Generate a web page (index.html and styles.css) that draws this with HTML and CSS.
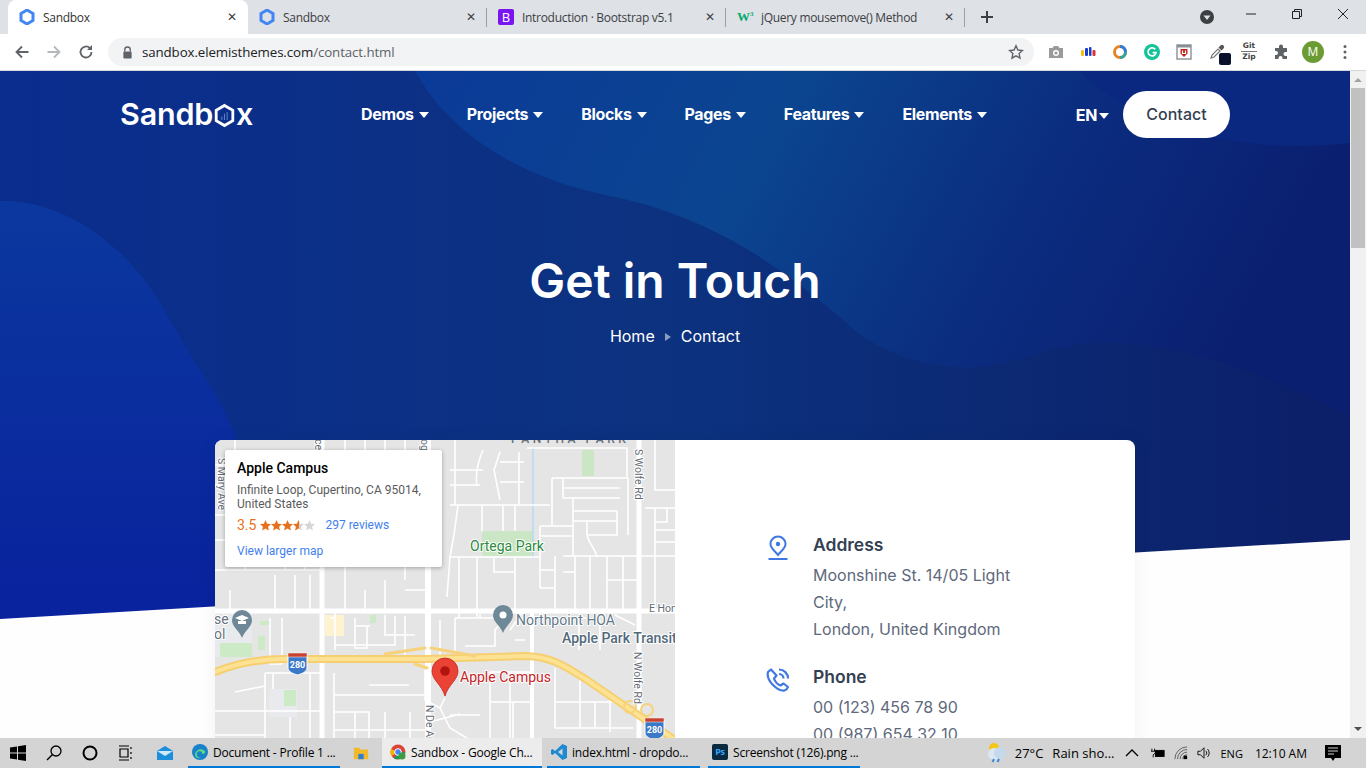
FILE: index.html
```html
<!DOCTYPE html>
<html lang="en">
<head>
    <meta charset="UTF-8">
    <meta name="viewport" content="width=device-width, initial-scale=1.0">
    <title>Sandbox</title>
    <link rel="stylesheet" href="styles.css">
</head>
<body>
    <!-- browser tabs -->
    <div class="tabbar">
        <div class="tab active">
            <svg class="fav" viewBox="0 0 16 16"><path d="M8 1l6 3.5v7L8 15l-6-3.5v-7z" fill="#fff" stroke="#4285f4" stroke-width="3"/></svg>
            <span class="tab-title">Sandbox</span>
            <span class="tab-x">&#10005;</span>
        </div>
        <div class="tab">
            <svg class="fav" viewBox="0 0 16 16"><path d="M8 1l6 3.5v7L8 15l-6-3.5v-7z" fill="#dee1e6" stroke="#4285f4" stroke-width="3"/></svg>
            <span class="tab-title">Sandbox</span>
            <span class="tab-x">&#10005;</span>
        </div>
        <div class="tab">
            <span class="fav fav-b">B</span>
            <span class="tab-title">Introduction · Bootstrap v5.1</span>
            <span class="tab-x">&#10005;</span>
        </div>
        <div class="tab">
            <span class="fav fav-w">W<sup>3</sup></span>
            <span class="tab-title">jQuery mousemove() Method</span>
            <span class="tab-x">&#10005;</span>
        </div>
        <svg class="new-tab" viewBox="0 0 14 14"><path d="M7 1v12M1 7h12" stroke="#3c4043" stroke-width="2"/></svg>
        <div class="win-controls">
            <span class="profile-drop"><svg viewBox="0 0 14 14"><circle cx="7" cy="7" r="7" fill="#3c4043"/><path d="M3.5 5.5h7L7 10z" fill="#dee1e6"/></svg></span>
            <svg class="win-btn" viewBox="0 0 12 12"><path d="M1 6h10" stroke="#222" stroke-width="1"/></svg>
            <svg class="win-btn" viewBox="0 0 12 12"><path d="M1.5 3.5h7v7h-7zM3.5 3.5v-2h7v7h-2" fill="none" stroke="#222" stroke-width="1"/></svg>
            <svg class="win-btn" viewBox="0 0 12 12"><path d="M1 1l10 10M11 1L1 11" stroke="#222" stroke-width="1"/></svg>
        </div>
    </div>

    <!-- address bar -->
    <div class="toolbar">
        <svg class="tool-icon" viewBox="0 0 16 16"><path d="M14.5 8H2.5M8 2.5L2.5 8 8 13.5" fill="none" stroke="#5f6368" stroke-width="1.8"/></svg>
        <svg class="tool-icon" viewBox="0 0 16 16"><path d="M1.5 8h12M8 2.5L13.5 8 8 13.5" fill="none" stroke="#b4b7bb" stroke-width="1.8"/></svg>
        <svg class="tool-icon" viewBox="0 0 16 16"><path d="M13.5 8a5.5 5.5 0 1 1-1.6-3.9" fill="none" stroke="#5f6368" stroke-width="1.8"/><path d="M14 1v5h-5z" fill="#5f6368"/></svg>
        <div class="omnibox">
            <svg class="lock" viewBox="0 0 12 14"><path d="M3 6V4a3 3 0 0 1 6 0v2" fill="none" stroke="#5f6368" stroke-width="1.5"/><rect x="1.5" y="6" width="9" height="7.5" rx="1" fill="#5f6368"/></svg>
            <span class="url">sandbox.elemisthemes.com<span class="url-path">/contact.html</span></span>
            <svg class="star" viewBox="0 0 16 16"><path d="M8 1.8l1.9 4.2 4.6.5-3.4 3.1.9 4.5L8 11.8l-4 2.3.9-4.5-3.4-3.1 4.6-.5z" fill="none" stroke="#5f6368" stroke-width="1.4"/></svg>
        </div>
        <div class="extensions">
            <svg class="ext" viewBox="0 0 16 16"><path d="M1 4h3.5L6 2h4l1.500 2H15v10H1z" fill="#9a9a9a"/><circle cx="8" cy="9" r="3" fill="#fff"/><circle cx="8" cy="9" r="1.600" fill="#9a9a9a"/></svg>
            <svg class="ext" viewBox="0 0 16 16"><rect x="1" y="6" width="3" height="6" rx="1" fill="#f4c20d"/><rect x="5" y="4" width="3" height="8" rx="1" fill="#1a3fd0"/><rect x="9" y="3" width="2.500" height="9" rx="1" fill="#1a3fd0"/><rect x="12.500" y="6" width="3" height="6" rx="1" fill="#db3236"/></svg>
            <svg class="ext" viewBox="0 0 16 16"><circle cx="8" cy="8" r="5.500" fill="none" stroke="#e8832a" stroke-width="3"/><path d="M8 2.500A5.500 5.500 0 0 1 13.500 8" fill="none" stroke="#2b7de0" stroke-width="3"/><path d="M13.500 8A5.500 5.500 0 0 1 8 13.500" fill="none" stroke="#2aa7a0" stroke-width="3"/></svg>
            <svg class="ext" viewBox="0 0 16 16"><circle cx="8" cy="8" r="8" fill="#15c39a"/><path d="M11.200 5.400A4 4 0 1 0 12 8.600H8.600" fill="none" stroke="#fff" stroke-width="1.700"/></svg>
            <svg class="ext" viewBox="0 0 16 16"><rect x="1" y="1" width="14" height="14" fill="#fff" stroke="#8a8f94" stroke-width="1.400"/><rect x="1" y="1" width="14" height="2.500" fill="#8a8f94"/><path d="M4.500 5h7v4.500L8 13 4.500 9.500z" fill="#c5221f"/><path d="M6.500 6.500v3h3v-3" fill="none" stroke="#fff" stroke-width="1.200"/></svg>
            <span class="ext ext-dropper">
                <svg viewBox="0 0 16 16"><path d="M2 14l1-3 6-6 2 2-6 6z" fill="#fff" stroke="#777" stroke-width="1.200"/><path d="M9.500 3.500l2-2a1.400 1.400 0 0 1 3 3l-2 2z" fill="#555"/></svg>
                <span class="dropper-badge"></span>
            </span>
            <span class="ext gitzip"><span class="gz-line">Git</span><span>Zip</span></span>
            <svg class="ext" viewBox="0 0 16 16"><path d="M6 2.500a2 2 0 0 1 4 0V4h4v4h-1.500a2 2 0 0 0 0 4H14v3H9.500v-1a2 2 0 0 0-4 0v1H2v-4h1a2 2 0 0 0 0-4H2V4h4z" fill="#5f6368"/></svg>
            <span class="avatar">M</span>
            <svg class="kebab" viewBox="0 0 4 16"><circle cx="2" cy="2.500" r="1.500" fill="#5f6368"/><circle cx="2" cy="8" r="1.500" fill="#5f6368"/><circle cx="2" cy="13.500" r="1.500" fill="#5f6368"/></svg>
        </div>
    </div>

    <div class="viewport">
        <div class="page">
            <svg class="hero-bg" viewBox="0 0 1350 600" preserveAspectRatio="none">
                <defs>
                    <linearGradient id="heroBase" x1="0" y1="0" x2="1" y2="0">
                        <stop offset="0" stop-color="#0a2d8e"/>
                        <stop offset="0.5" stop-color="#0c327f"/>
                        <stop offset="1" stop-color="#0c1f68"/>
                    </linearGradient>
                    <linearGradient id="heroWave" x1="0" y1="0" x2="1" y2="0.2">
                        <stop offset="0" stop-color="#0b3a98"/>
                        <stop offset="0.4" stop-color="#0b4590"/>
                        <stop offset="0.7" stop-color="#0b2d80"/>
                        <stop offset="1" stop-color="#0b1f70"/>
                    </linearGradient>
                    <linearGradient id="leftWave" x1="0" y1="0" x2="0" y2="1">
                        <stop offset="0" stop-color="#0b389e"/>
                        <stop offset="1" stop-color="#091f9e"/>
                    </linearGradient>
                </defs>
                <rect width="1350" height="600" fill="url(#heroBase)"/>
                <path d="M415 0C445 55 510 105 610 125C700 143 770 185 850 255C890 290 960 310 1030 285C1100 262 1180 262 1350 345V0Z" fill="url(#heroWave)"/>
                <path d="M1080 0C1130 55 1240 85 1350 72V0Z" fill="#0b2880"/>
                <path d="M0 130C60 128 125 170 165 240C205 315 245 350 245 420C245 490 215 530 215 600H0Z" fill="url(#leftWave)"/>
                <path d="M0 548L1350 469V600H0Z" fill="#fefefe"/>
            </svg>

            <nav class="navbar">
                <a class="logo">Sandb<svg class="logo-o" viewBox="0 0 24 28"><path d="M12 2.500l9.500 5.500v12L12 25.500 2.500 20V8z" fill="none" stroke="#fff" stroke-width="3.200"/><path d="M9 19v-4M12 19v-7M15 19v-9" stroke="#5d7fc4" stroke-width="1.200"/></svg>x</a>
                <ul class="nav-links">
                    <li>Demos<i class="caret"></i></li>
                    <li>Projects<i class="caret"></i></li>
                    <li>Blocks<i class="caret"></i></li>
                    <li>Pages<i class="caret"></i></li>
                    <li>Features<i class="caret"></i></li>
                    <li>Elements<i class="caret"></i></li>
                </ul>
                <span class="lang">EN<i class="caret"></i></span>
                <a class="contact-btn">Contact</a>
            </nav>

            <header class="hero-title">
                <h1>Get in Touch</h1>
                <div class="crumbs">
                    <span>Home</span>
                    <i class="crumb-sep"></i>
                    <span>Contact</span>
                </div>
            </header>

            <section class="contact-card">
                <div class="map">
                    <svg class="map-svg" viewBox="0 0 460 300">
                        <rect width="460" height="300" fill="#e5e5e5"/>
                        <!-- parks and areas -->
                        <rect x="0" y="173" width="37" height="44" fill="#e8eaed"/>
                        <rect x="5" y="203" width="32" height="14" fill="#cdeac6"/>
                        <rect x="43" y="196" width="7" height="14" fill="#cdeac6"/>
                        <rect x="45" y="181" width="9" height="4" fill="#cdeac6"/>
                        <rect x="155" y="175" width="6" height="8" fill="#cdeac6"/>
                        <rect x="110" y="175" width="19" height="21" fill="#fdf3d0"/>
                        <rect x="54" y="249" width="28" height="28" fill="#e8eaed"/>
                        <rect x="69" y="250" width="12" height="16" fill="#cdeac6"/>
                        <rect x="267" y="91" width="51" height="25" rx="3" fill="#cbe6c4"/>
                        <rect x="367" y="10" width="12" height="26" fill="#cbe6c4"/>
                        <path d="M318 8v110" stroke="#b5d8f7" stroke-width="1.500"/>
                        <!-- small streets -->
                        <g fill="none" stroke="#fff" stroke-width="1.600">
                            <path d="M240 0v65M268 10c-6 14-8 24-6 36M235 30h33M235 45h30M285 12l-6 18 6 30M285 22h24M285 42h24M304 12v52"/>
                            <path d="M312 8h100v30M337 38h76M337 38v47M348 38v20h57M348 48h57M358 58v57M358 71h44M358 81h44M402 71v24h-30M372 95v-14M372 95c2 10 8 12 10 22"/>
                            <path d="M413 38v57M325 86h33M325 86v62M325 96h33M348 116h112M235 117h90"/>
                            <path d="M235 65h100M243 65l-4 30-4 22M267 65v26M288 65v26M300 65v26"/>
                            <path d="M440 0v50h20M430 68h30M440 68v48M452 68v14h-12M440 90h20M440 102h20"/>
                            <path d="M235 117l-3 40M244 117v60M262 117v60M279 117v15h20M300 117v54M340 116v55M360 116v55M375 116v55M392 116v55M408 116v55"/>
                            <path d="M325 130h15M325 148h15M348 132h12M392 140h32M440 116v55"/>
                            <path d="M0 25h30M20 0v25M0 45h25M25 30v60M0 75h40M40 60v50M0 100h100M60 20v80M85 10v90M0 130h105M30 100v30M70 100v30M90 100v30"/>
                            <path d="M130 0v170M150 0v60h40M170 0v60M190 0v140M150 40h70M110 30h20M110 60h20M110 90h100M150 90v30M150 120c10 5 20 5 40 5M190 150h23M150 150v20M170 140v30"/>
                            <path d="M15 150v20M60 135v36M80 135v36M95 135v36M115 178h4M120 170v40M140 178v30h12v-22h-12M170 175v20h30M155 186h-15"/>
                            <path d="M55 178v46h12M67 178v46M120 205h60M180 176v30M190 176v40"/>
                            <path d="M225 180v40M240 178h50l-10 12v16h-30M240 178v38M265 178v-4M295 190l14-20M300 200h10"/>
                            <path d="M365 178h6M364 180v30M385 180v30M400 175l20 10"/>
                            <path d="M50 233h59M50 233v67M0 271h107M95 233v67M20 252l30-6M0 295h50M58 233v16M75 277v23"/>
                            <path d="M119 233v67M119 255h94M119 272h35v28M140 272v28M170 272v28M195 272v28M119 290h94M154 245h40"/>
                            <path d="M210 230v30l15 8 5-10M225 268l10 20 20 12M235 275h30M215 282l30-8M275 232v68M275 232h40M295 232v68M275 262h40M298 262v38"/>
                            <path d="M340 228v60M340 262h60M365 240v48M395 252v40M340 288h78M380 262v26"/>
                        </g>
                        <!-- main roads -->
                        <g fill="none" stroke="#fff">
                            <path d="M0 171h460" stroke-width="5"/>
                            <path d="M213 0v300" stroke-width="6"/>
                            <path d="M107 0v300" stroke-width="5"/>
                            <path d="M424 0v300" stroke-width="5"/>
                            <path d="M317 170v130" stroke-width="4"/>
                        </g>
                        <!-- highway -->
                        <g fill="none" stroke-linecap="round">
                            <path d="M0 232C20 224 40 219 70 219H210L310 216C335 216 350 226 372 240L460 300" stroke="#f6cf70" stroke-width="8"/>
                            <path d="M0 232C20 224 40 219 70 219H210L310 216C335 216 350 226 372 240L460 300" stroke="#fde293" stroke-width="4"/>
                            <path d="M170 214L210 208M216 208L260 216M200 224L212 228" stroke="#f8d27a" stroke-width="3"/>
                            <circle cx="415" cy="267" r="6" stroke="#f8d27a" stroke-width="2"/>
                            <circle cx="432" cy="270" r="6" stroke="#f8d27a" stroke-width="2"/>
                        </g>
                        <!-- shields -->
                        <g class="shield">
                            <path d="M73 215h19v13c0 4-6 6-9.500 7-3.500-1-9.500-3-9.500-7z" fill="#3b78c8" stroke="#fff"/>
                            <rect x="73" y="213" width="19" height="4" fill="#c8402f" stroke="#fff" stroke-width="0.500"/>
                            <text x="82.500" y="228" class="shield-text">280</text>
                            <path d="M430 280h19v13c0 4-6 6-9.500 7-3.500-1-9.500-3-9.500-7z" fill="#3b78c8" stroke="#fff"/>
                            <rect x="430" y="278" width="19" height="4" fill="#c8402f" stroke="#fff" stroke-width="0.500"/>
                            <text x="439.500" y="293" class="shield-text">280</text>
                        </g>
                        <!-- gray pins -->
                        <path d="M288 165a10 10 0 0 1 10 10c0 7-7 10-10 18-3-8-10-11-10-18a10 10 0 0 1 10-10z" fill="#6f8897"/>
                        <circle cx="288" cy="175" r="3.500" fill="#fff"/>
                        <path d="M27 170a10 10 0 0 1 10 10c0 7-7 10-10 18-3-8-10-11-10-18a10 10 0 0 1 10-10z" fill="#6f8897"/>
                        <path d="M20 178l7-3 7 3-7 3zM23 181v3h8v-3" fill="#fff"/>
                        <!-- red pin -->
                        <path d="M230 218a13 13 0 0 1 13 13c0 9-10 14-13 25-3-11-13-16-13-25a13 13 0 0 1 13-13z" fill="#ea4335" stroke="#c5221f" stroke-width="0.800"/>
                        <circle cx="230" cy="231" r="4.800" fill="#b3140d"/>
                        <!-- labels -->
                        <text x="296" y="3" class="lbl lbl-gray lbl-caps">PANTHA PARK</text>
                        <text x="255" y="111" class="lbl lbl-green halo">Ortega Park</text>
                        <text x="301" y="185" class="lbl lbl-slate halo">Northpoint HOA</text>
                        <text x="347" y="203" class="lbl lbl-slate lbl-bold halo">Apple Park Transit</text>
                        <text x="245" y="242" class="lbl lbl-red halo">Apple Campus</text>
                        <text x="434" y="172" class="lbl-road halo">E Hom</text>
                        <text x="-1" y="184" class="lbl lbl-gray halo">se</text>
                        <text x="-1" y="199" class="lbl lbl-gray halo">ol</text>
                        <text class="lbl-road halo" transform="translate(3 18) rotate(90)">S Mary Ave</text>
                        <text class="lbl-road halo" transform="translate(420 9) rotate(90)">S Wolfe Rd</text>
                        <text class="lbl-road halo" transform="translate(419 212) rotate(90)">N Wolfe Rd</text>
                        <text class="lbl-road halo" transform="translate(211 265) rotate(90)">N De An</text>
                        <text class="lbl-road halo" transform="translate(100 -1) rotate(90)">ce</text>
                        <text class="lbl-road halo" transform="translate(206 -1) rotate(90)">og</text>
                    </svg>
                    <div class="map-info">
                        <div class="place-name">Apple Campus</div>
                        <div class="place-addr">Infinite Loop, Cupertino, CA 95014, United States</div>
                        <div class="place-rating">
                            <span class="rating-num">3.5</span>
                            <svg class="rating-stars" viewBox="0 0 55 11">
                                <defs>
                                    <linearGradient id="halfStar"><stop offset="0.5" stop-color="#e7711b"/><stop offset="0.5" stop-color="#d6d6d6"/></linearGradient>
                                    <path id="oneStar" d="M5.500 0l1.600 3.700 3.900.4-2.900 2.600.8 3.900-3.400-2-3.400 2 .8-3.900L0 4.100l3.900-.4z"/>
                                </defs>
                                <use href="#oneStar" fill="#e7711b"/>
                                <use href="#oneStar" x="11" fill="#e7711b"/>
                                <use href="#oneStar" x="22" fill="#e7711b"/>
                                <use href="#oneStar" x="33" fill="url(#halfStar)"/>
                                <use href="#oneStar" x="44" fill="#d6d6d6"/>
                            </svg>
                            <span class="place-link reviews">297 reviews</span>
                        </div>
                        <div class="place-link">View larger map</div>
                    </div>
                </div>
                <div class="contact-info">
                    <div class="info-row">
                        <svg class="info-icon" viewBox="0 0 24 26"><path d="M12 1.500a7.500 7.500 0 0 1 7.500 7.500c0 4.500-4.500 7-7.500 11-3-4-7.500-6.500-7.500-11A7.500 7.500 0 0 1 12 1.500z" fill="none" stroke="#3f78e0" stroke-width="2"/><circle cx="12" cy="9" r="2.200" fill="#3f78e0"/><path d="M2.500 24h19" stroke="#3f78e0" stroke-width="2"/></svg>
                        <div>
                            <h5>Address</h5>
                            <p>Moonshine St. 14/05 Light<br>City,<br>London, United Kingdom</p>
                        </div>
                    </div>
                    <div class="info-row">
                        <svg class="info-icon" viewBox="0 0 24 26"><path d="M5 2.500L2 5c-1 4 1 9 5 13s8 6 11.500 5.500c1.500-.5 3-2 3.500-3.500l-4.500-3.500-3 2C12 17.500 9 14.500 8 11.500l2.500-3z" fill="none" stroke="#3f78e0" stroke-width="2.200" stroke-linejoin="round"/><path d="M13 7c2.500 0 4.500 2 4.500 4.500M13 2.500c5 0 9 4 9 9" fill="none" stroke="#3f78e0" stroke-width="2.200"/></svg>
                        <div>
                            <h5>Phone</h5>
                            <p>00 (123) 456 78 90<br>00 (987) 654 32 10</p>
                        </div>
                    </div>
                </div>
            </section>
        </div>
        <div class="scrollbar">
            <svg class="scroll-arrow" viewBox="0 0 16 17"><path d="M4 11l4-4 4 4z" fill="#a3a3a3"/></svg>
            <div class="scroll-track"><div class="scroll-thumb"></div></div>
            <svg class="scroll-arrow" viewBox="0 0 16 17"><path d="M4 6l4 4 4-4z" fill="#505050"/></svg>
        </div>
    </div>

    <!-- windows taskbar -->
    <div class="taskbar">
        <svg class="tb-start" viewBox="0 0 16 16"><path d="M0 2.500l7-1v6H0zM8 1.300L16 0v7.500H8zM0 8.500h7v6l-7-1zM8 8.500h8V16l-8-1.200z" fill="#000"/></svg>
        <svg class="tb-sys" viewBox="0 0 16 16"><circle cx="10" cy="6" r="5" fill="none" stroke="#000" stroke-width="1.300"/><path d="M6.500 9.500L1 15" stroke="#000" stroke-width="1.500"/></svg>
        <svg class="tb-sys" viewBox="0 0 16 16"><circle cx="8" cy="8" r="6.500" fill="none" stroke="#000" stroke-width="2"/></svg>
        <svg class="tb-sys" viewBox="0 0 16 16"><path d="M1 1h10M1 15h10M2 4h8v8H2zM13 2v2M13 7v2M13 12v2" fill="none" stroke="#000" stroke-width="1.200"/></svg>
        <svg class="tb-sys tb-mail" viewBox="0 0 18 16"><path d="M1 6l8-5 8 5v9H1z" fill="#1b8fdc"/><path d="M1 6l8 5 8-5" fill="#cfe9fb"/></svg>
        <div class="tb-app tb-edge">
            <svg class="tb-ico" viewBox="0 0 16 16"><circle cx="8" cy="8" r="8" fill="#1781c9"/><path d="M3 11c0-5 6-8 10-4 1 2-1 3-3 3 1-3-4-4-5-1-1 2 1 5 4 5-3 1-6-1-6-3z" fill="#5fd58a"/></svg>
            <span>Document - Profile 1 ...</span>
        </div>
        <div class="tb-folder">
            <svg class="tb-ico" viewBox="0 0 18 16"><path d="M1 2h6l2 2h8v11H1z" fill="#f3b92d"/><rect x="6" y="9" width="6" height="6" fill="#2f7fd0"/></svg>
        </div>
        <div class="tb-app tb-chrome">
            <svg class="tb-ico" viewBox="0 0 16 16"><circle cx="8" cy="8" r="7.500" fill="#db4437"/><path d="M8 8L1.500 12A7.500 7.500 0 0 1 1 5z" fill="#f4b400"/><path d="M8 8l7 0A7.500 7.500 0 0 1 4 14.500z" fill="#0f9d58"/><circle cx="8" cy="8" r="3.300" fill="#4285f4" stroke="#fff"/><circle cx="12" cy="12" r="3.500" fill="#3f9b45"/></svg>
            <span>Sandbox - Google Ch...</span>
        </div>
        <div class="tb-app tb-code">
            <svg class="tb-ico" viewBox="0 0 16 16"><path d="M11.500 0L16 2v12l-4.500 2L4 9l-2.500 2L0 10V6l1.500-1L4 7z" fill="#1f8ad2"/><path d="M11.500 4.500L7 8l4.500 3.500z" fill="#d3d3d3"/></svg>
            <span>index.html - dropdo...</span>
        </div>
        <div class="tb-app tb-ps">
            <span class="ps-icon">Ps</span>
            <span>Screenshot (126).png ...</span>
        </div>
        <div class="tray">
            <svg class="tray-weather" viewBox="0 0 24 22"><circle cx="10" cy="6" r="5" fill="#f5c518"/><circle cx="10" cy="12" r="6" fill="#dbe7f3"/><circle cx="16" cy="11" r="6" fill="#c5d9ec"/><path d="M10 17l-1.500 3M15 17l-1.500 3" stroke="#3a8ad6" stroke-width="2"/></svg>
            <span class="tray-temp">27°C</span>
            <span class="tray-cond">Rain sho...</span>
            <svg class="tray-ico chev" viewBox="0 0 14 14"><path d="M1 10l6-6 6 6" fill="none" stroke="#000" stroke-width="1.300"/></svg>
            <svg class="tray-ico" viewBox="0 0 16 14"><path d="M1 2v3M4 2v3M0 5h5v2L2.500 9v3" fill="none" stroke="#000"/><rect x="5" y="4" width="10" height="7" fill="#000" stroke="#000"/></svg>
            <svg class="tray-ico" viewBox="0 0 16 16"><path d="M1 15A14 14 0 0 1 15 1M4 15A11 11 0 0 1 15 4M7 15a8 8 0 0 1 8-8M10 15a5 5 0 0 1 5-5" fill="none" stroke="#333" stroke-width="0.800"/><rect x="11" y="11" width="4" height="4" fill="#000"/></svg>
            <svg class="tray-ico" viewBox="0 0 16 16"><path d="M1 6h3l4-4v12l-4-4H1z" fill="none" stroke="#000"/><path d="M10 5.500c1.500 1.500 1.500 3.500 0 5M12 3.500c2.500 2.500 2.500 6.500 0 9" fill="none" stroke="#000"/></svg>
            <span class="tray-lang">ENG</span>
            <span class="tray-time">12:10 AM</span>
            <svg class="tray-note" viewBox="0 0 16 16"><path d="M0 0h16v13h-6l-2 3-2-3H0z" fill="#000"/><path d="M3 3h10M3 6h10M3 9h6" stroke="#d3d3d3"/></svg>
        </div>
    </div>
</body>
</html>
```

FILE: styles.css
```css
* {
    box-sizing: border-box;
}
html, body {
    margin: 0;
    padding: 0;
}
body {
    width: 1366px;
    height: 768px;
    overflow: hidden;
    display: flex;
    flex-direction: column;
    font-family: Inter, "Liberation Sans", sans-serif;
    background: #fff;
}

/* tabs */
.tabbar {
    height: 34px;
    flex: none;
    display: flex;
    align-items: stretch;
    padding-left: 8px;
    background: #dee1e6;
    font-family: "Open Sans", sans-serif;
    font-size: 12px;
    color: #3c4043;
}
.tab {
    width: 239px;
    display: flex;
    align-items: center;
    gap: 8px;
    padding: 0 11px 0 11px;
    position: relative;
}
.tab::after {
    content: "";
    position: absolute;
    right: 0;
    top: 8px;
    height: 19px;
    width: 1px;
    background: #9aa0a6;
}
.tab:first-child::after {
    display: none;
}
.tab.active {
    width: 240px;
    background: #fff;
    border-radius: 8px 8px 0 0;
    color: #333;
}
.tab.active + .tab::after {
    display: block;
}
.fav {
    width: 16px;
    height: 16px;
    flex: none;
}
.fav-b {
    background: #7a14f0;
    color: #fff;
    border-radius: 2px;
    text-align: center;
    font-size: 13px;
    line-height: 16px;
}
.fav-w {
    color: #04aa6d;
    font-family: "Liberation Serif", serif;
    font-weight: bold;
    font-size: 13px;
    line-height: 16px;
}
.fav-w sup {
    font-size: 7px;
    line-height: 0;
}
.tab-title {
    flex: 1;
    white-space: nowrap;
    overflow: hidden;
    letter-spacing: -0.3px;
}
.tab-x {
    font-size: 12px;
    font-family: "DejaVu Sans", sans-serif;
    color: #3c4043;
    font-weight: bold;
}
.new-tab {
    width: 14px;
    height: 14px;
    margin: 10px 0 0 15px;
}
.win-controls {
    margin-left: auto;
    display: flex;
    align-items: flex-start;
}
.profile-drop {
    width: 14px;
    height: 14px;
    margin: 10px 31px 0 0;
    display: block;
}
.profile-drop svg {
    display: block;
}
.win-btn {
    width: 12px;
    height: 12px;
    margin: 8px 0 0 0;
}
.win-btn + .win-btn {
    margin-left: 34px;
}
.win-btn:last-child {
    margin-right: 17px;
}

/* address bar */
.toolbar {
    height: 37px;
    flex: none;
    display: flex;
    align-items: center;
    padding: 0 0 0 14px;
    gap: 16px;
    background: #fff;
    border-bottom: 1px solid #d5d7da;
}
.tool-icon {
    width: 16px;
    height: 16px;
    flex: none;
}
.omnibox {
    width: 926px;
    height: 28px;
    margin-left: -2px;
    display: flex;
    align-items: center;
    padding: 0 10px 0 14px;
    background: #f1f3f4;
    border-radius: 14px;
    font-family: "Open Sans", sans-serif;
    font-size: 13.3px;
    color: #202124;
}
.lock {
    width: 11px;
    height: 13px;
    margin-right: 9px;
}
.url {
    letter-spacing: -0.1px;
}
.url-path {
    color: #5f6368;
}
.star {
    width: 16px;
    height: 16px;
    margin-left: auto;
}
.extensions {
    display: flex;
    align-items: center;
    margin-left: -2px;
    gap: 16px;
}
.ext {
    width: 16px;
    height: 16px;
    flex: none;
    display: block;
}
.ext-dropper {
    position: relative;
    margin-left: 1px;
}
.ext-dropper svg {
    display: block;
}
.dropper-badge {
    position: absolute;
    right: -6px;
    bottom: -5px;
    width: 12px;
    height: 12px;
    border-radius: 2px;
    background: #0a0f2c;
}
.gitzip {
    width: 16px;
    height: 22px;
    font-family: "DejaVu Sans", sans-serif;
    font-size: 7.5px;
    font-weight: bold;
    line-height: 10px;
    color: #444;
    text-align: center;
}
.gz-line {
    display: block;
    border-bottom: 1px solid #777;
}
.avatar {
    width: 22px;
    height: 22px;
    flex: none;
    border-radius: 50%;
    background: #6a9c33;
    color: #fff;
    text-align: center;
    font-size: 12px;
    line-height: 22px;
    font-family: "Open Sans", sans-serif;
    margin-left: -3px;
}
.kebab {
    width: 4px;
    height: 16px;
    margin-left: 3px;
}

/* page area */
.viewport {
    flex: 1;
    min-height: 0;
    display: flex;
}
.page {
    flex: 1;
    min-width: 0;
    position: relative;
    overflow: hidden;
    background: #fefefe;
}
.hero-bg {
    position: absolute;
    left: 0;
    top: 0;
    width: 1350px;
    height: 600px;
}
.navbar {
    position: relative;
    display: flex;
    align-items: center;
    margin: 20px 120px 0;
    height: 47px;
    color: #fff;
}
.logo {
    width: 241px;
    flex: none;
    display: flex;
    align-items: center;
    margin-top: -2px;
    font-size: 30.5px;
    font-weight: 600;
    letter-spacing: -0.2px;
    line-height: 47px;
}
.logo-o {
    width: 21px;
    height: 25px;
    margin: 3px 1px 0;
}
.nav-links {
    display: flex;
    gap: 38px;
    list-style: none;
    margin: -2px 0 0;
    padding: 0;
    font-size: 16px;
    font-weight: 700;
    letter-spacing: -0.35px;
}
.nav-links li {
    display: flex;
    align-items: center;
}
.caret {
    display: inline-block;
    width: 0;
    height: 0;
    margin-left: 5px;
    margin-top: 2px;
    border-left: 5px solid transparent;
    border-right: 5px solid transparent;
    border-top: 6px solid #fff;
}
.lang {
    margin-left: auto;
    display: flex;
    align-items: center;
    font-size: 16px;
    font-weight: 700;
    letter-spacing: -0.35px;
}
.lang .caret {
    margin-left: 2px;
}
.contact-btn {
    width: 107px;
    height: 47px;
    margin-left: 14px;
    border-radius: 24px;
    background: #fff;
    color: #343f52;
    text-align: center;
    font-size: 16px;
    font-weight: 500;
    line-height: 47px;
}
.hero-title {
    position: relative;
    margin-top: 115px;
    text-align: center;
    color: #fff;
}
.hero-title h1 {
    margin: 0;
    font-size: 48px;
    font-weight: 600;
    line-height: 56px;
}
.crumbs {
    display: flex;
    justify-content: center;
    align-items: center;
    gap: 10px;
    margin-top: 14px;
    font-size: 16px;
    line-height: 27px;
}
.crumb-sep {
    width: 0;
    height: 0;
    border-top: 4px solid transparent;
    border-bottom: 4px solid transparent;
    border-left: 6px solid #8c9cc0;
}

/* contact card */
.contact-card {
    position: relative;
    width: 920px;
    height: 420px;
    margin: 90px auto 0;
    display: flex;
    border-radius: 8px;
    overflow: hidden;
    background: #fff;
    box-shadow: 0 0 20px rgba(30, 34, 40, 0.05);
}
.map {
    width: 460px;
    flex: none;
    position: relative;
    background: #e5e5e5;
}
.map-svg {
    display: block;
    width: 460px;
    height: 300px;
    font-family: Roboto, sans-serif;
}
.lbl {
    font-size: 14px;
}
.lbl-gray {
    fill: #68727c;
}
.lbl-caps {
    font-size: 12px;
    font-weight: 500;
    letter-spacing: 3.5px;
}
.lbl-green {
    fill: #2b8a3e;
}
.lbl-slate {
    fill: #63798a;
}
.lbl-bold {
    font-weight: 500;
    fill: #52697a;
}
.lbl-red {
    fill: #c5221f;
}
.lbl-road {
    font-size: 10.5px;
    fill: #5f6b75;
}
.halo {
    paint-order: stroke;
    stroke: #fff;
    stroke-width: 2px;
    stroke-linejoin: round;
}
.shield-text {
    font-size: 9px;
    font-weight: 700;
    fill: #fff;
    text-anchor: middle;
}
.map-info {
    position: absolute;
    left: 10px;
    top: 10px;
    width: 217px;
    height: 117px;
    padding: 10px 12px;
    background: #fff;
    border-radius: 2px;
    box-shadow: 0 1px 4px rgba(0, 0, 0, 0.3);
    font-family: Roboto, sans-serif;
    font-size: 12px;
    color: #5b5b5b;
}
.place-name {
    font-size: 14px;
    font-weight: 500;
    color: #000;
    line-height: 17px;
    margin-bottom: 6px;
}
.place-addr {
    line-height: 14px;
}
.place-rating {
    display: flex;
    align-items: center;
    margin-top: 6px;
    height: 16px;
}
.rating-num {
    color: #e7711b;
    font-size: 14px;
    margin-right: 4px;
}
.rating-stars {
    width: 55px;
    height: 11px;
}
.place-link {
    color: #427fed;
    line-height: 14px;
    margin-top: 11px;
}
.reviews {
    margin: 0 0 0 10px;
}
.contact-info {
    flex: 1;
    padding: 91px 0 0 91px;
}
.info-row {
    display: flex;
    gap: 23px;
    margin-bottom: 20px;
}
.info-icon {
    width: 24px;
    height: 26px;
    flex: none;
    margin-top: 4px;
}
.info-row h5 {
    margin: 0 0 4px;
    font-size: 17.5px;
    font-weight: 600;
    line-height: 27px;
    color: #343f52;
}
.info-row p {
    margin: 0;
    font-size: 16px;
    line-height: 27px;
    color: #60697b;
}

/* scrollbar */
.scrollbar {
    width: 16px;
    flex: none;
    display: flex;
    flex-direction: column;
    background: #f1f1f1;
}
.scroll-arrow {
    width: 16px;
    height: 17px;
    flex: none;
}
.scroll-track {
    flex: 1;
    min-height: 0;
    padding: 0 1px;
}
.scroll-thumb {
    height: 160px;
    background: #c1c1c1;
}

/* taskbar */
.taskbar {
    height: 30px;
    flex: none;
    display: flex;
    align-items: stretch;
    background: #d4d4d4;
    font-family: "Open Sans", sans-serif;
    font-size: 12px;
    color: #000;
}
.tb-start {
    width: 16px;
    height: 16px;
    margin: 7px 0 0 10px;
}
.tb-sys {
    width: 16px;
    height: 16px;
    margin: 7px 0 0 20px;
}
.tb-mail {
    width: 18px;
    margin-left: 22px;
}
.tb-app {
    display: flex;
    align-items: center;
    gap: 5px;
    padding: 0 0 0 4px;
    border-bottom: 2px solid #0078d7;
    white-space: nowrap;
    letter-spacing: -0.2px;
}
.tb-edge {
    width: 152px;
    margin-left: 14px;
}
.tb-folder {
    width: 42px;
    display: flex;
    align-items: center;
    justify-content: center;
}
.tb-chrome {
    width: 160px;
    background: #ececec;
    padding-left: 8px;
}
.tb-code {
    width: 153px;
    margin-left: 5px;
}
.tb-ps {
    width: 152px;
    margin-left: 8px;
}
.tb-ico {
    width: 16px;
    height: 16px;
    flex: none;
}
.ps-icon {
    width: 16px;
    height: 16px;
    background: #0a2a3f;
    color: #31a8ff;
    font-size: 9px;
    font-weight: 700;
    line-height: 16px;
    text-align: center;
    border-radius: 2px;
    flex: none;
}
.tray {
    margin-left: auto;
    display: flex;
    align-items: center;
    padding-right: 25px;
}
.tray-weather {
    width: 24px;
    height: 22px;
}
.tray-temp {
    margin-left: 7px;
    font-size: 13px;
}
.tray-cond {
    margin-left: 9px;
    font-size: 13px;
    margin-right: 11px;
}
.tray-ico {
    width: 14px;
    height: 14px;
    margin-right: 9px;
}
.tray-ico.chev {
    margin-right: 12px;
}
.tray-lang {
    margin-left: 0;
    font-size: 11px;
}
.tray-time {
    margin-left: 12px;
    font-size: 12px;
}
.tray-note {
    width: 16px;
    height: 16px;
    margin-left: 18px;
}
```
